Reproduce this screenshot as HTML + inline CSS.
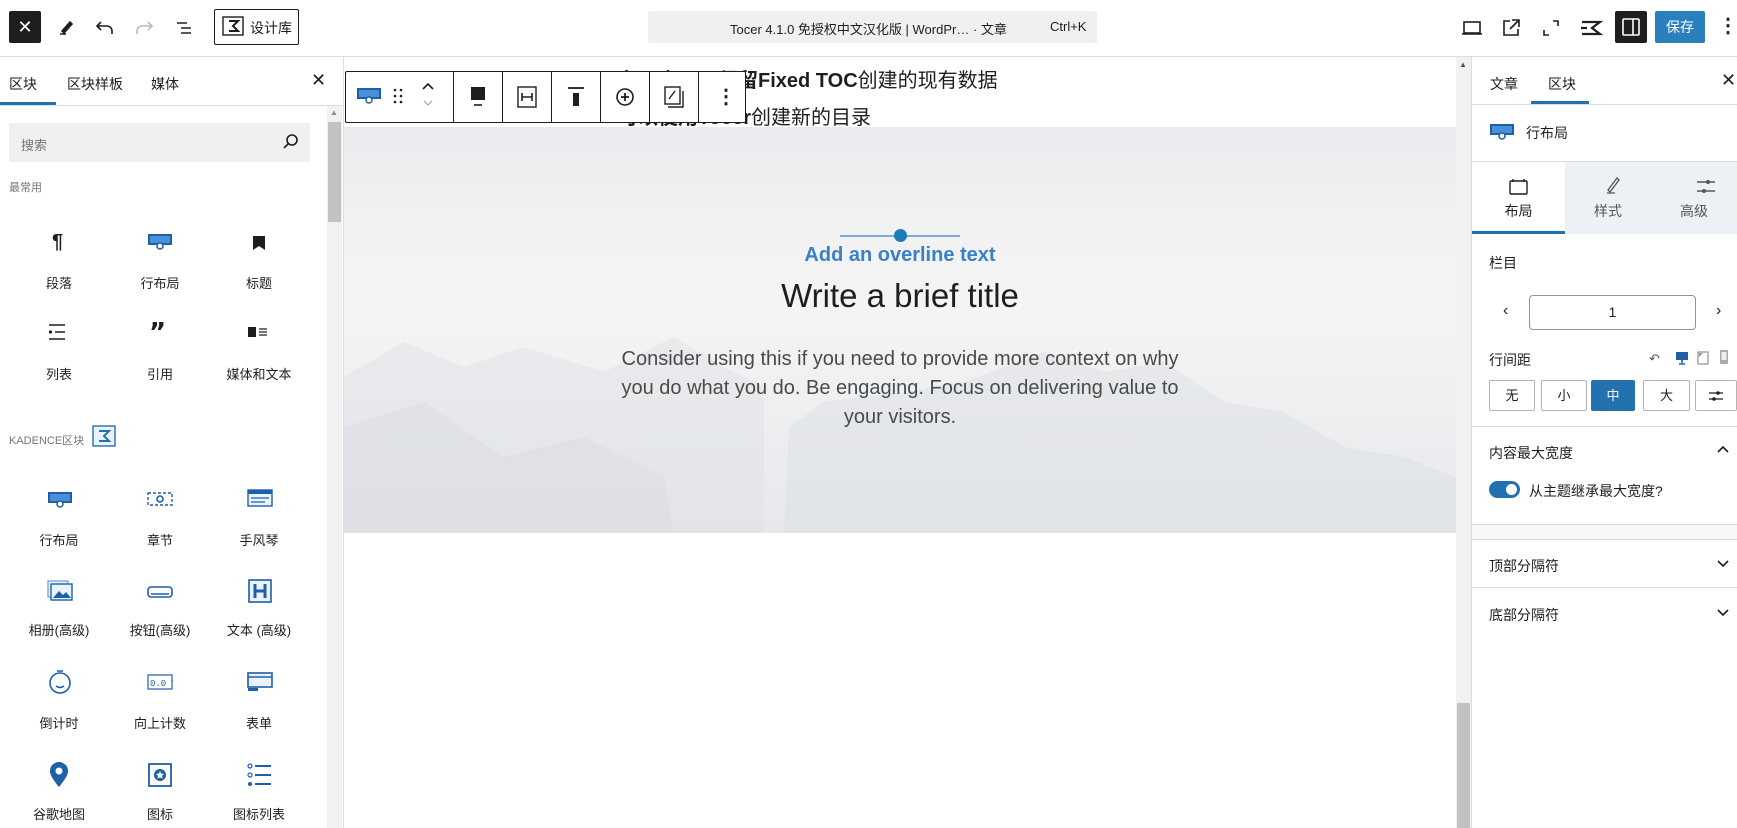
<!DOCTYPE html>
<html><head><meta charset="utf-8">
<style>
*{box-sizing:border-box;margin:0;padding:0}
body{width:1737px;height:828px;overflow:hidden;background:#fff;font-family:"Liberation Sans","Noto Sans CJK SC",sans-serif;color:#1e1e1e;font-size:14px;position:relative}
.a{position:absolute}
.c{text-align:center}
svg{display:block}
.lbl{position:absolute;width:110px;margin-left:-55px;text-align:center;font-size:13px;color:#1e1e1e}
.ic{position:absolute;margin-left:-12px}
.btn{position:absolute;top:380px;height:31px;border:1px solid #1e1e1e55;border-radius:2px;font-size:13px;text-align:center;line-height:29px}
</style></head><body>

<!-- top bar -->
<div class="a" style="left:0;top:0;width:1737px;height:57px;border-bottom:1px solid #ddd"></div>
<div class="a" style="left:9px;top:11px;width:32px;height:32px;background:#1e1e1e;border-radius:2px;color:#fff;font-size:18px;text-align:center;line-height:32px">✕</div>
<svg class="a" style="left:54px;top:16px" width="24" height="24"><path d="M6 18h6M8 15l8-9 2 2-8 9z" stroke="#1e1e1e" stroke-width="1.6" fill="#1e1e1e"/></svg>
<svg class="a" style="left:93px;top:16px" width="24" height="24"><path d="M8 6L4 10l4 4M4 10h10a5 5 0 0 1 5 5v3" stroke="#1e1e1e" stroke-width="1.6" fill="none"/></svg>
<svg class="a" style="left:132px;top:16px" width="24" height="24"><path d="M16 6l4 4-4 4M20 10H10a5 5 0 0 0-5 5v3" stroke="#bbb" stroke-width="1.6" fill="none"/></svg>
<svg class="a" style="left:172px;top:16px" width="24" height="24"><path d="M5 7h10M9 12h10M9 17h10" stroke="#1e1e1e" stroke-width="1.6"/></svg>
<div class="a" style="left:214px;top:9px;width:85px;height:36px;border:1px solid #1e1e1e;border-radius:2px"></div>
<svg class="a" style="left:222px;top:16px" width="24" height="22"><rect x="1" y="1" width="20" height="18" fill="none" stroke="#1e1e1e" stroke-width="1.4"/><path d="M7 5h9l-5 5 5 5H7" stroke="#1e1e1e" stroke-width="2" fill="none"/></svg>
<div class="a" style="left:250px;top:18px;font-size:14px">设计库</div>
<div class="a" style="left:648px;top:11px;width:449px;height:32px;background:#f0f0f0;border-radius:2px"></div>
<div class="a" style="left:730px;top:19px;font-size:13px;color:#1e1e1e">Tocer 4.1.0 免授权中文汉化版 | WordPr… · 文章</div>
<div class="a" style="left:1050px;top:19px;font-size:13px;color:#1e1e1e">Ctrl+K</div>
<svg class="a" style="left:1460px;top:16px" width="24" height="24"><rect x="4" y="6" width="16" height="11" fill="none" stroke="#1e1e1e" stroke-width="1.6"/><path d="M2 18h20" stroke="#1e1e1e" stroke-width="1.6"/></svg>
<svg class="a" style="left:1499px;top:16px" width="24" height="24"><path d="M11 5H5v14h14v-6M13 4h7v7M20 4l-9 9" stroke="#1e1e1e" stroke-width="1.6" fill="none"/></svg>
<svg class="a" style="left:1539px;top:16px" width="24" height="24"><path d="M14 5h5v5M10 19H5v-5" stroke="#1e1e1e" stroke-width="1.6" fill="none"/></svg>
<svg class="a" style="left:1578px;top:16px" width="26" height="24"><path d="M4 6h18l-8 6 8 6H4M3 12h6" stroke="#1e1e1e" stroke-width="2.2" fill="none"/></svg>
<div class="a" style="left:1615px;top:11px;width:32px;height:32px;background:#1e1e1e;border-radius:2px"></div>
<svg class="a" style="left:1619px;top:15px" width="24" height="24"><rect x="4" y="4" width="16" height="16" rx="1" fill="none" stroke="#fff" stroke-width="1.6"/><path d="M14 4v16" stroke="#fff" stroke-width="1.6"/></svg>
<div class="a" style="left:1655px;top:11px;width:50px;height:32px;background:#2a7fbd;border-radius:2px;color:#fff;font-size:14px;text-align:center;line-height:32px">保存</div>
<div class="a" style="left:1718px;top:13px;font-size:20px;font-weight:bold">⋮</div>

<!-- left sidebar -->
<div class="a" style="left:343px;top:57px;width:1px;height:771px;background:#ddd"></div>
<div class="a" style="left:0;top:105px;width:343px;height:1px;background:#ddd"></div>
<div class="a" style="left:0;top:102px;width:56px;height:3px;background:#2271b1"></div>
<div class="a" style="left:9px;top:74px;font-size:14px">区块</div>
<div class="a" style="left:67px;top:74px;font-size:14px">区块样板</div>
<div class="a" style="left:151px;top:74px;font-size:14px">媒体</div>
<div class="a" style="left:311px;top:70px;font-size:18px">✕</div>
<div class="a" style="left:327px;top:106px;width:15px;height:722px;background:#f1f1f1"></div>
<div class="a" style="left:328px;top:122px;width:13px;height:100px;background:#c1c1c1"></div>
<div class="a" style="left:330px;top:108px;font-size:8px;color:#888">▲</div>
<div class="a" style="left:9px;top:123px;width:301px;height:39px;background:#f0f0f0;border-radius:2px"></div>
<div class="a" style="left:21px;top:135px;font-size:13px;color:#757575">搜索</div>
<svg class="a" style="left:280px;top:131px" width="22" height="22"><circle cx="12" cy="9" r="5" fill="none" stroke="#1e1e1e" stroke-width="1.6"/><path d="M8.5 12.5L4 17" stroke="#1e1e1e" stroke-width="1.6"/></svg>
<div class="a" style="left:9px;top:179px;font-size:11px;color:#757575">最常用</div>

<!-- common blocks -->
<div class="a" style="left:52px;top:231px;font-size:20px;font-weight:bold">¶</div>
<svg class="ic" style="left:159px;top:232px" width="26" height="20"><rect x="1" y="2" width="24" height="11" fill="#1f5fa8"/><rect x="3" y="4" width="20" height="7" fill="#4a90d9"/><circle cx="13" cy="14" r="3" fill="#fff" stroke="#1f5fa8" stroke-width="1.5"/></svg>
<svg class="ic" style="left:259px;top:234px" width="24" height="20"><path d="M6 2h12v14l-6-4-6 4z" fill="#1e1e1e"/></svg>
<div class="lbl" style="left:59px;top:273px">段落</div>
<div class="lbl" style="left:160px;top:273px">行布局</div>
<div class="lbl" style="left:259px;top:273px">标题</div>
<svg class="ic" style="left:59px;top:323px" width="24" height="20"><path d="M2 2h16M8 9h10M2 16h16" stroke="#1e1e1e" stroke-width="1.5"/><circle cx="3.5" cy="9" r="1.6" fill="#1e1e1e"/></svg>
<div class="a" style="left:149px;top:318px;font-size:26px;font-weight:bold;font-family:'DejaVu Sans'">”</div>
<svg class="ic" style="left:259px;top:325px" width="26" height="16"><rect x="1" y="2" width="8" height="10" fill="#1e1e1e"/><path d="M12 4h8M12 7h8M12 10h8" stroke="#1e1e1e" stroke-width="1.3"/></svg>
<div class="lbl" style="left:59px;top:364px">列表</div>
<div class="lbl" style="left:160px;top:364px">引用</div>
<div class="lbl" style="left:259px;top:364px">媒体和文本</div>

<div class="a" style="left:9px;top:432px;font-size:11px;color:#757575">KADENCE区块</div>
<svg class="a" style="left:92px;top:425px" width="24" height="22"><rect x="1" y="1" width="22" height="20" fill="#eaf3fc" stroke="#2271b1" stroke-width="1.4"/><path d="M7 6h10l-5 5 5 5H7" stroke="#2271b1" stroke-width="2" fill="none"/></svg>

<!-- kadence blocks -->
<svg class="ic" style="left:59px;top:490px" width="26" height="20"><rect x="1" y="2" width="24" height="11" fill="#1f5fa8"/><rect x="3" y="4" width="20" height="7" fill="#4a90d9"/><circle cx="13" cy="14" r="3" fill="#fff" stroke="#1f5fa8" stroke-width="1.5"/></svg>
<svg class="ic" style="left:159px;top:490px" width="26" height="20"><rect x="1" y="3" width="24" height="12" fill="none" stroke="#1f5fa8" stroke-width="1.4" stroke-dasharray="3 2"/><circle cx="13" cy="9" r="3" fill="none" stroke="#1f5fa8" stroke-width="1.6"/></svg>
<svg class="ic" style="left:259px;top:488px" width="26" height="22"><rect x="1" y="2" width="24" height="16" fill="#eaf3fc" stroke="#1f5fa8" stroke-width="1.4"/><rect x="1" y="2" width="24" height="4" fill="#1f5fa8"/><path d="M4 10h18M4 14h14" stroke="#1f5fa8" stroke-width="1.2"/></svg>
<div class="lbl" style="left:59px;top:530px">行布局</div>
<div class="lbl" style="left:160px;top:530px">章节</div>
<div class="lbl" style="left:259px;top:530px">手风琴</div>
<svg class="ic" style="left:59px;top:580px" width="26" height="22"><rect x="1" y="1" width="20" height="16" fill="#eaf3fc" stroke="#6b9bd3" stroke-width="1.2"/><rect x="4" y="4" width="21" height="16" fill="#eaf3fc" stroke="#1f5fa8" stroke-width="1.4"/><path d="M6 18l6-7 4 4 3-3 5 6z" fill="#1f5fa8"/></svg>
<svg class="ic" style="left:159px;top:585px" width="26" height="14"><rect x="1" y="2" width="24" height="10" rx="3" fill="none" stroke="#1f5fa8" stroke-width="1.6"/><path d="M4 9h18" stroke="#1f5fa8" stroke-width="1.4"/></svg>
<svg class="ic" style="left:259px;top:579px" width="26" height="24"><rect x="2" y="1" width="22" height="22" fill="#eaf3fc" stroke="#1f5fa8" stroke-width="1.6"/><path d="M8 5v14M18 5v14M8 12h10" stroke="#1f5fa8" stroke-width="3"/></svg>
<div class="lbl" style="left:59px;top:620px">相册(高级)</div>
<div class="lbl" style="left:160px;top:620px">按钮(高级)</div>
<div class="lbl" style="left:259px;top:620px">文本 (高级)</div>
<svg class="ic" style="left:59px;top:669px" width="26" height="26"><circle cx="13" cy="14" r="10" fill="none" stroke="#1f5fa8" stroke-width="1.6"/><path d="M10 2h6M9 17q4 3 8 0" stroke="#1f5fa8" stroke-width="1.6" fill="none"/></svg>
<svg class="ic" style="left:159px;top:673px" width="26" height="18"><rect x="1" y="2" width="24" height="14" fill="none" stroke="#1f5fa8" stroke-width="1.2"/><text x="3" y="13" font-size="9" fill="#1f5fa8" font-family="Liberation Mono">0.0 7</text></svg>
<svg class="ic" style="left:259px;top:671px" width="26" height="22"><rect x="1" y="2" width="24" height="14" fill="#eaf3fc" stroke="#1f5fa8" stroke-width="1.6"/><path d="M1 6h24" stroke="#1f5fa8" stroke-width="1.6"/><rect x="1" y="17" width="10" height="3" fill="#1f5fa8"/></svg>
<div class="lbl" style="left:59px;top:713px">倒计时</div>
<div class="lbl" style="left:160px;top:713px">向上计数</div>
<div class="lbl" style="left:259px;top:713px">表单</div>
<svg class="ic" style="left:59px;top:761px" width="24" height="28"><path d="M12 26C4 16 3 13 3 10a9 9 0 0 1 18 0c0 3-1 6-9 16z" fill="#1f5fa8"/><circle cx="12" cy="10" r="3.5" fill="#fff"/></svg>
<svg class="ic" style="left:159px;top:762px" width="26" height="26"><rect x="2" y="2" width="22" height="22" fill="none" stroke="#1f5fa8" stroke-width="1.8"/><circle cx="13" cy="13" r="6" fill="#1f5fa8"/><path d="M13 9l1.2 2.6 2.8.3-2 2 .6 2.8L13 15.3l-2.6 1.4.6-2.8-2-2 2.8-.3z" fill="#fff"/></svg>
<svg class="ic" style="left:259px;top:762px" width="26" height="26"><circle cx="3" cy="4" r="2" fill="none" stroke="#1f5fa8" stroke-width="1.2"/><circle cx="3" cy="13" r="2" fill="none" stroke="#1f5fa8" stroke-width="1.2"/><circle cx="3" cy="22" r="2" fill="#1f5fa8"/><path d="M8 4h16M8 13h16M8 22h16" stroke="#1f5fa8" stroke-width="2"/></svg>
<div class="lbl" style="left:59px;top:804px">谷歌地图</div>
<div class="lbl" style="left:160px;top:804px">图标</div>
<div class="lbl" style="left:259px;top:804px">图标列表</div>

<!-- canvas -->
<div class="a" style="left:1456px;top:57px;width:15px;height:771px;background:#f1f1f1"></div>
<div class="a" style="left:1457px;top:703px;width:13px;height:125px;background:#c1c1c1"></div>
<div class="a" style="left:1459px;top:60px;font-size:8px;color:#555">▲</div>
<div class="a" style="left:618px;top:64px;font-size:20px;white-space:nowrap"><b>老用户可以保留Fixed TOC</b>创建的现有数据</div>
<div class="a" style="left:618px;top:101px;font-size:20px;white-space:nowrap"><b>可以使用Tocer</b>创建新的目录</div>

<div class="a" style="left:344px;top:127px;width:1112px;height:406px;overflow:hidden;background:linear-gradient(180deg,#e9ebee 0%,#f1f2f2 25%,#f4f4f3 45%,#eeeff1 70%,#e6e8eb 100%)">
<svg width="1112" height="406" style="position:absolute;left:0;top:0">
<path d="M0 250 L60 215 L120 240 L180 220 L260 245 L330 210 L380 240 L420 260 L420 406 L0 406z" fill="#dde0e5" opacity=".45"/>
<path d="M0 300 L80 275 L160 330 L240 310 L320 350 L330 406 L0 406z" fill="#d6dae0" opacity=".4"/>
<path d="M440 406 L445 300 L480 275 L560 265 L620 255 L700 225 L760 245 L820 235 L880 275 L940 285 L1000 320 L1060 330 L1112 350 L1112 406z" fill="#dcdfe4" opacity=".5"/>
</svg></div>

<div class="a" style="left:840px;top:235px;width:120px;height:2px;background:#7ba7d9"></div>
<div class="a" style="left:894px;top:229px;width:13px;height:13px;border-radius:50%;background:#1e7bb8"></div>
<div class="a c" style="left:700px;top:244px;width:400px;font-size:20px;font-weight:bold;color:#3a80c8">Add an overline text</div>
<div class="a c" style="left:600px;top:277px;width:600px;font-size:33px;color:#1e1e1e">Write a brief title</div>
<div class="a c" style="left:595px;top:345px;width:610px;font-size:20px;line-height:29px;color:#4a4a4a">Consider using this if you need to provide more context on why<br>you do what you do. Be engaging. Focus on delivering value to<br>your visitors.</div>

<!-- block toolbar -->
<div class="a" style="left:345px;top:71px;width:401px;height:52px;border:1px solid #1e1e1e;background:#fff;border-radius:2px"></div>
<div class="a" style="left:453px;top:72px;width:1px;height:50px;background:#1e1e1e"></div>
<div class="a" style="left:502px;top:72px;width:1px;height:50px;background:#1e1e1e"></div>
<div class="a" style="left:551px;top:72px;width:1px;height:50px;background:#1e1e1e"></div>
<div class="a" style="left:600px;top:72px;width:1px;height:50px;background:#1e1e1e"></div>
<div class="a" style="left:649px;top:72px;width:1px;height:50px;background:#1e1e1e"></div>
<div class="a" style="left:698px;top:72px;width:1px;height:50px;background:#1e1e1e"></div>
<svg class="a" style="left:356px;top:86px" width="26" height="20"><rect x="1" y="2" width="24" height="11" fill="#1f5fa8"/><rect x="3" y="4" width="20" height="7" fill="#4a90d9"/><circle cx="13" cy="14" r="3" fill="#fff" stroke="#1f5fa8" stroke-width="1.5"/></svg>
<svg class="a" style="left:392px;top:86px" width="12" height="20"><g fill="#1e1e1e"><circle cx="3" cy="4" r="1.3"/><circle cx="9" cy="4" r="1.3"/><circle cx="3" cy="10" r="1.3"/><circle cx="9" cy="10" r="1.3"/><circle cx="3" cy="16" r="1.3"/><circle cx="9" cy="16" r="1.3"/></g></svg>
<svg class="a" style="left:420px;top:80px" width="16" height="30"><path d="M3 9l5-5 5 5" stroke="#1e1e1e" stroke-width="1.6" fill="none"/><path d="M4 21l4 4 4-4" stroke="#aaa" stroke-width="1.3" fill="none"/></svg>
<svg class="a" style="left:466px;top:84px" width="24" height="26"><rect x="5" y="3" width="14" height="13" fill="#1e1e1e"/><path d="M8 21h8" stroke="#1e1e1e" stroke-width="1.6"/></svg>
<svg class="a" style="left:515px;top:84px" width="24" height="26"><rect x="3" y="3" width="18" height="20" fill="none" stroke="#1e1e1e" stroke-width="1.4"/><path d="M7 9v8M17 9v8M7 13h10" stroke="#1e1e1e" stroke-width="1.6"/></svg>
<svg class="a" style="left:564px;top:84px" width="24" height="26"><path d="M4 4h16" stroke="#1e1e1e" stroke-width="1.8"/><rect x="9" y="9" width="6" height="13" fill="#1e1e1e"/></svg>
<svg class="a" style="left:613px;top:84px" width="24" height="26"><circle cx="12" cy="13" r="8" fill="none" stroke="#1e1e1e" stroke-width="1.6"/><path d="M12 9v8M8 13h8" stroke="#1e1e1e" stroke-width="1.8"/></svg>
<svg class="a" style="left:662px;top:84px" width="24" height="26"><rect x="3" y="3" width="15" height="17" fill="none" stroke="#1e1e1e" stroke-width="1.4"/><path d="M7 15l6-8M6 23h15V7" stroke="#1e1e1e" stroke-width="1.4" fill="none"/></svg>
<div class="a" style="left:716px;top:84px;font-size:20px;font-weight:bold">⋮</div>

<!-- right sidebar -->
<div class="a" style="left:1471px;top:57px;width:1px;height:771px;background:#ddd"></div>
<div class="a" style="left:1490px;top:74px;font-size:14px">文章</div>
<div class="a" style="left:1548px;top:74px;font-size:14px">区块</div>
<div class="a" style="left:1531px;top:101px;width:58px;height:3px;background:#2271b1"></div>
<div class="a" style="left:1721px;top:70px;font-size:18px">✕</div>
<div class="a" style="left:1472px;top:104px;width:265px;height:1px;background:#ddd"></div>
<svg class="a" style="left:1489px;top:122px" width="26" height="20"><rect x="1" y="2" width="24" height="11" fill="#1f5fa8"/><rect x="3" y="4" width="20" height="7" fill="#4a90d9"/><circle cx="13" cy="14" r="3" fill="#fff" stroke="#1f5fa8" stroke-width="1.5"/></svg>
<div class="a" style="left:1526px;top:123px;font-size:14px">行布局</div>
<div class="a" style="left:1472px;top:161px;width:265px;height:1px;background:#ddd"></div>
<div class="a" style="left:1565px;top:162px;width:172px;height:72px;background:#edf1f6"></div>
<div class="a" style="left:1472px;top:231px;width:93px;height:3px;background:#2271b1"></div>
<svg class="a" style="left:1508px;top:177px" width="22" height="20"><rect x="2" y="4" width="17" height="13" rx="1" fill="none" stroke="#1e1e1e" stroke-width="1.4"/><path d="M5 2v3M16 2v3" stroke="#1e1e1e" stroke-width="1.4"/></svg>
<svg class="a" style="left:1602px;top:175px" width="22" height="22"><path d="M5 18h8M6 15l9-12 2 2-9 12z" stroke="#555" stroke-width="1.3" fill="none"/></svg>
<svg class="a" style="left:1695px;top:177px" width="22" height="20"><path d="M2 5h18M2 14h18" stroke="#555" stroke-width="1.4"/><circle cx="13" cy="5" r="2" fill="#555"/><circle cx="9" cy="14" r="2" fill="#555"/></svg>
<div class="a c" style="left:1472px;top:201px;width:93px;font-size:14px">布局</div>
<div class="a c" style="left:1565px;top:201px;width:86px;font-size:14px;color:#555">样式</div>
<div class="a c" style="left:1651px;top:201px;width:86px;font-size:14px;color:#555">高级</div>

<div class="a" style="left:1489px;top:253px;font-size:14px">栏目</div>
<div class="a" style="left:1503px;top:302px;font-size:16px">‹</div>
<div class="a" style="left:1529px;top:295px;width:167px;height:35px;border:1px solid #949494;border-radius:4px;text-align:center;line-height:33px;font-size:14px">1</div>
<div class="a" style="left:1716px;top:302px;font-size:16px">›</div>
<div class="a" style="left:1489px;top:350px;font-size:14px">行间距</div>
<div class="a" style="left:1649px;top:351px;font-size:13px;color:#555">↶</div>
<svg class="a" style="left:1674px;top:350px" width="16" height="16"><rect x="2" y="2" width="12" height="8" fill="#1f5fa8"/><path d="M8 10v3M5 14h6" stroke="#1f5fa8" stroke-width="1.6"/></svg>
<svg class="a" style="left:1696px;top:350px" width="14" height="16"><rect x="2" y="2" width="10" height="12" fill="none" stroke="#999" stroke-width="1.3"/><path d="M3 3l4 0 -4 4z" fill="#999"/></svg>
<svg class="a" style="left:1718px;top:349px" width="12" height="17"><rect x="2" y="1" width="8" height="14" rx="1" fill="#aaa"/><rect x="3.5" y="3" width="5" height="8" fill="#eee"/></svg>
<div class="btn" style="left:1489px;width:46px">无</div>
<div class="btn" style="left:1541px;width:46px">小</div>
<div class="btn" style="left:1591px;width:44px;background:#2271b1;color:#fff;border-color:#2271b1">中</div>
<div class="btn" style="left:1643px;width:47px">大</div>
<div class="btn" style="left:1695px;width:42px"><svg style="margin:8px auto" width="16" height="14"><path d="M1 4h14M1 10h14" stroke="#1e1e1e" stroke-width="1.3"/><circle cx="10" cy="4" r="1.8" fill="#1e1e1e"/><circle cx="6" cy="10" r="1.8" fill="#1e1e1e"/></svg></div>
<div class="a" style="left:1472px;top:426px;width:265px;height:1px;background:#ddd"></div>
<div class="a" style="left:1489px;top:443px;font-size:14px">内容最大宽度</div>
<svg class="a" style="left:1715px;top:442px" width="16" height="14"><path d="M3 10l5-5 5 5" stroke="#1e1e1e" stroke-width="1.6" fill="none"/></svg>
<div class="a" style="left:1489px;top:481px;width:31px;height:17px;border-radius:9px;background:#2271b1"></div>
<div class="a" style="left:1506px;top:484px;width:11px;height:11px;border-radius:50%;background:#fff"></div>
<div class="a" style="left:1529px;top:481px;font-size:14px">从主题继承最大宽度?</div>
<div class="a" style="left:1472px;top:524px;width:265px;height:16px;background:#f7f7f7;border-top:1px solid #ddd;border-bottom:1px solid #ddd"></div>
<div class="a" style="left:1489px;top:556px;font-size:14px">顶部分隔符</div>
<svg class="a" style="left:1715px;top:557px" width="16" height="14"><path d="M3 4l5 5 5-5" stroke="#1e1e1e" stroke-width="1.6" fill="none"/></svg>
<div class="a" style="left:1472px;top:587px;width:265px;height:1px;background:#ddd"></div>
<div class="a" style="left:1489px;top:605px;font-size:14px">底部分隔符</div>
<svg class="a" style="left:1715px;top:606px" width="16" height="14"><path d="M3 4l5 5 5-5" stroke="#1e1e1e" stroke-width="1.6" fill="none"/></svg>
</body></html>
